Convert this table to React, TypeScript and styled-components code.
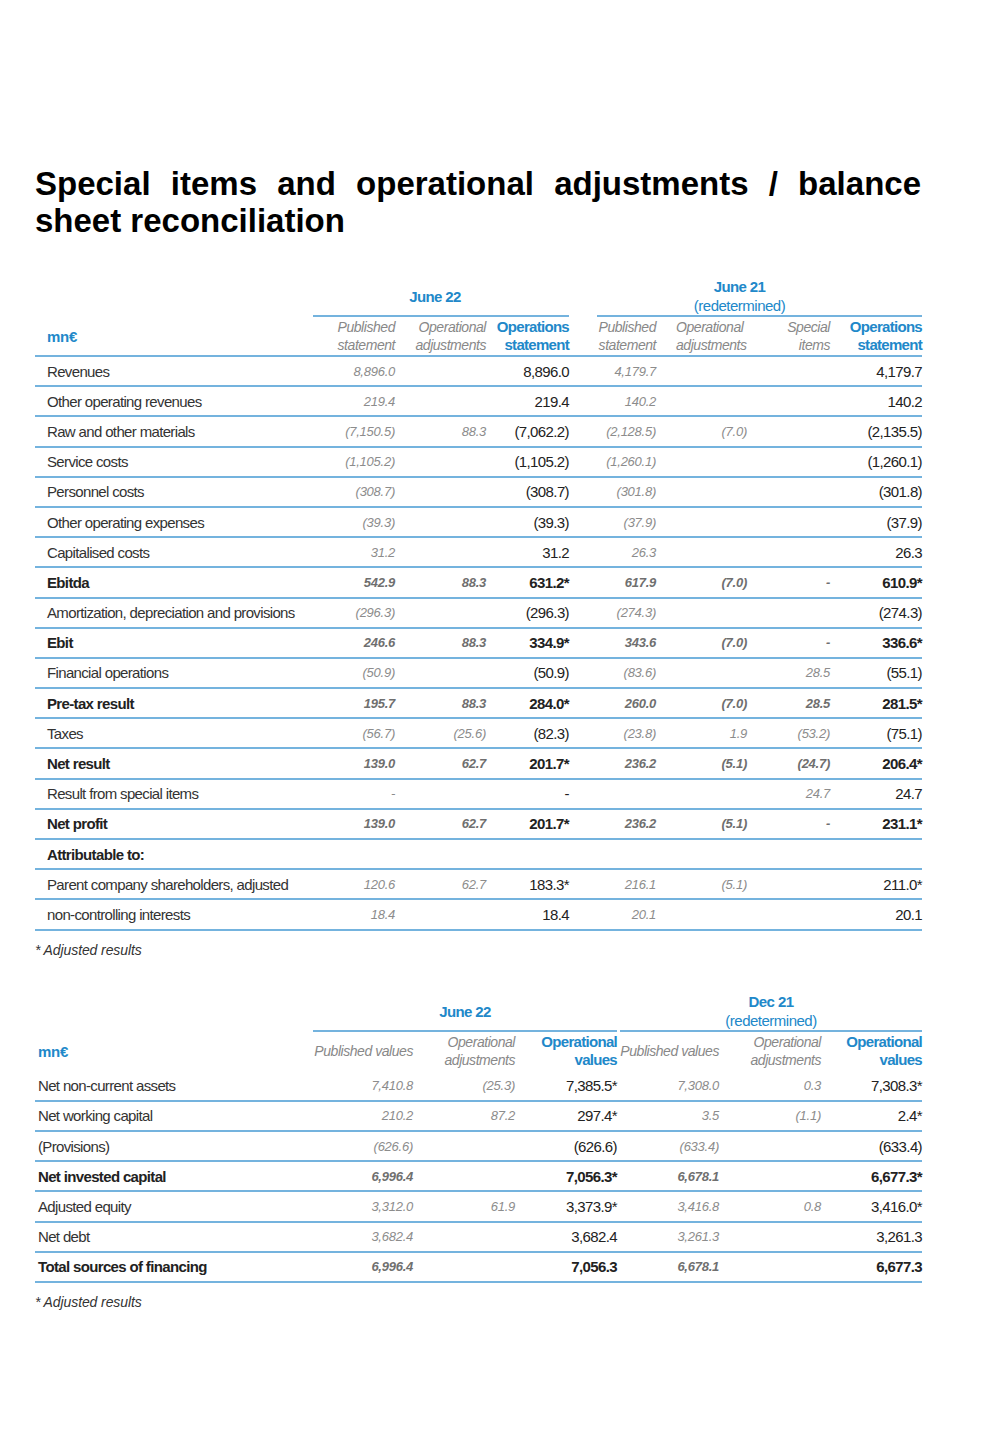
import React from "react";
import styled, { createGlobalStyle } from "styled-components";

const GlobalStyle = createGlobalStyle`
	html, body {
		margin: 0;
		padding: 0;
		background: #fff;
	}
	body {
		font-family: "Liberation Sans Narrow", "Arial Narrow", "Liberation Sans", Arial, sans-serif;
		color: #333;
	}
`;

const BLUE = "#2188c9";
const LINE = "#74b3de";

const Page = styled.div`
	width: 1000px;
	min-height: 1430px;
	box-sizing: border-box;
	padding: 165px 78px 0 35px;
`;

const Title = styled.h1`
	margin: 0;
	width: 886px;
	font-family: "Liberation Sans", Arial, sans-serif;
	font-size: 33px;
	line-height: 37px;
	font-weight: bold;
	color: #000;
	text-align: justify;
`;

const Table = styled.table<{ $first?: boolean }>`
	width: 887px;
	margin-top: ${(p) => (p.$first ? "38px" : "33px")};
	border-collapse: collapse;
	table-layout: fixed;
`;

const GroupCell = styled.th`
	padding: 0;
	vertical-align: bottom;
	font-weight: bold;
	font-size: 15px;
	line-height: 19px;
	letter-spacing: -0.6px;
	color: ${BLUE};
`;

const GroupInner = styled.div<{ $inset: number; $shift: number; $below: number }>`
	margin-left: ${(p) => p.$inset}px;
	border-bottom: 2px solid ${LINE};
	padding: 0 ${(p) => p.$shift}px ${(p) => p.$below}px 0;
	text-align: center;
`;

const Sub = styled.div`
	font-weight: normal;
	font-size: 15px;
	line-height: 19px;
	letter-spacing: -0.5px;
`;

const HeadRow = styled.tr<{ $line: boolean; $h: number }>`
	height: ${(p) => p.$h}px;
	border-bottom: ${(p) => (p.$line ? `2px solid ${LINE}` : "none")};
`;

const UnitCell = styled.th<{ $pad: number }>`
	padding: 0 0 0 ${(p) => p.$pad}px;
	text-align: left;
	font-weight: bold;
	font-size: 15px;
	letter-spacing: -0.3px;
	color: ${BLUE};
	vertical-align: middle;
`;

const ColHead = styled.th<{ $strong?: boolean; $left?: number }>`
	padding: 0 0 0 ${(p) => p.$left ?? 0}px;
	text-align: ${(p) => (p.$left ? "left" : "right")};
	vertical-align: middle;
	line-height: 18px;
	font-size: ${(p) => (p.$strong ? "15px" : "14px")};
	font-weight: ${(p) => (p.$strong ? "bold" : "normal")};
	font-style: ${(p) => (p.$strong ? "normal" : "italic")};
	letter-spacing: ${(p) => (p.$strong ? "-0.7px" : "-0.45px")};
	color: ${(p) => (p.$strong ? BLUE : "#888")};
	white-space: nowrap;
`;

const Row = styled.tr`
	height: 30.2px;
	border-bottom: 2px solid ${LINE};
`;

const Label = styled.td<{ $pad: number; $bold?: boolean }>`
	padding: 0 0 0 ${(p) => p.$pad}px;
	font-size: 15px;
	letter-spacing: -0.65px;
	font-weight: ${(p) => (p.$bold ? "bold" : "normal")};
	color: ${(p) => (p.$bold ? "#222" : "#333")};
	white-space: nowrap;
`;

const Num = styled.td<{ $ops?: boolean; $bold?: boolean }>`
	padding: 0;
	text-align: right;
	white-space: nowrap;
	font-size: ${(p) => (p.$ops ? "15px" : "13px")};
	letter-spacing: ${(p) => (p.$ops ? "-0.6px" : "-0.25px")};
	font-style: ${(p) => (p.$ops ? "normal" : "italic")};
	font-weight: ${(p) => (p.$bold ? "bold" : "normal")};
	color: ${(p) => (p.$ops ? "#222" : p.$bold ? "#6f6f6f" : "#8c8c8c")};
`;

const Note = styled.p<{ $top: number }>`
	margin: ${(p) => p.$top}px 0 0 0;
	font-family: "Liberation Sans", Arial, sans-serif;
	font-style: italic;
	font-size: 14px;
	line-height: 18px;
	letter-spacing: -0.1px;
	color: #333;
`;

type Line = { label: string; bold?: boolean; v: string[] };

const incomeRows: Line[] = [
	{ label: "Revenues", v: ["8,896.0", "", "8,896.0", "4,179.7", "", "", "4,179.7"] },
	{ label: "Other operating revenues", v: ["219.4", "", "219.4", "140.2", "", "", "140.2"] },
	{ label: "Raw and other materials", v: ["(7,150.5)", "88.3", "(7,062.2)", "(2,128.5)", "(7.0)", "", "(2,135.5)"] },
	{ label: "Service costs", v: ["(1,105.2)", "", "(1,105.2)", "(1,260.1)", "", "", "(1,260.1)"] },
	{ label: "Personnel costs", v: ["(308.7)", "", "(308.7)", "(301.8)", "", "", "(301.8)"] },
	{ label: "Other operating expenses", v: ["(39.3)", "", "(39.3)", "(37.9)", "", "", "(37.9)"] },
	{ label: "Capitalised costs", v: ["31.2", "", "31.2", "26.3", "", "", "26.3"] },
	{ label: "Ebitda", bold: true, v: ["542.9", "88.3", "631.2*", "617.9", "(7.0)", "-", "610.9*"] },
	{ label: "Amortization, depreciation and provisions", v: ["(296.3)", "", "(296.3)", "(274.3)", "", "", "(274.3)"] },
	{ label: "Ebit", bold: true, v: ["246.6", "88.3", "334.9*", "343.6", "(7.0)", "-", "336.6*"] },
	{ label: "Financial operations", v: ["(50.9)", "", "(50.9)", "(83.6)", "", "28.5", "(55.1)"] },
	{ label: "Pre-tax result", bold: true, v: ["195.7", "88.3", "284.0*", "260.0", "(7.0)", "28.5", "281.5*"] },
	{ label: "Taxes", v: ["(56.7)", "(25.6)", "(82.3)", "(23.8)", "1.9", "(53.2)", "(75.1)"] },
	{ label: "Net result", bold: true, v: ["139.0", "62.7", "201.7*", "236.2", "(5.1)", "(24.7)", "206.4*"] },
	{ label: "Result from special items", v: ["-", "", "-", "", "", "24.7", "24.7"] },
	{ label: "Net profit", bold: true, v: ["139.0", "62.7", "201.7*", "236.2", "(5.1)", "-", "231.1*"] },
	{ label: "Attributable to:", bold: true, v: ["", "", "", "", "", "", ""] },
	{ label: "Parent company shareholders, adjusted", v: ["120.6", "62.7", "183.3*", "216.1", "(5.1)", "", "211.0*"] },
	{ label: "non-controlling interests", v: ["18.4", "", "18.4", "20.1", "", "", "20.1"] },
];

const balanceRows: Line[] = [
	{ label: "Net non-current assets", v: ["7,410.8", "(25.3)", "7,385.5*", "7,308.0", "0.3", "7,308.3*"] },
	{ label: "Net working capital", v: ["210.2", "87.2", "297.4*", "3.5", "(1.1)", "2.4*"] },
	{ label: "(Provisions)", v: ["(626.6)", "", "(626.6)", "(633.4)", "", "(633.4)"] },
	{ label: "Net invested capital", bold: true, v: ["6,996.4", "", "7,056.3*", "6,678.1", "", "6,677.3*"] },
	{ label: "Adjusted equity", v: ["3,312.0", "61.9", "3,373.9*", "3,416.8", "0.8", "3,416.0*"] },
	{ label: "Net debt", v: ["3,682.4", "", "3,682.4", "3,261.3", "", "3,261.3"] },
	{ label: "Total sources of financing", bold: true, v: ["6,996.4", "", "7,056.3", "6,678.1", "", "6,677.3"] },
];

function TwoLine({ a, b }: { a: string; b: string }) {
	return (
		<>
			{a}
			<br />
			{b}
		</>
	);
}

function Body({ rows, ops, pad }: { rows: Line[]; ops: number[]; pad: number }) {
	return (
		<tbody>
			{rows.map((r) => (
				<Row key={r.label}>
					<Label $pad={pad} $bold={r.bold}>{r.label}</Label>
					{r.v.map((x, i) => (
						<Num key={i} $ops={ops.includes(i)} $bold={r.bold}>
							{x}
						</Num>
					))}
				</Row>
			))}
		</tbody>
	);
}

function IncomeTable() {
	return (
		<Table $first>
			<colgroup>
				<col style={{ width: 278 }} />
				<col style={{ width: 82 }} />
				<col style={{ width: 91 }} />
				<col style={{ width: 83 }} />
				<col style={{ width: 87 }} />
				<col style={{ width: 91 }} />
				<col style={{ width: 83 }} />
				<col style={{ width: 92 }} />
			</colgroup>
			<thead>
				<HeadRow $line={false} $h={38}>
					<th />
					<GroupCell colSpan={3}>
						<GroupInner $inset={0} $shift={12} $below={9}>June 22</GroupInner>
					</GroupCell>
					<GroupCell colSpan={4}>
						<GroupInner $inset={28} $shift={40} $below={0}>
							June 21
							<Sub>(redetermined)</Sub>
						</GroupInner>
					</GroupCell>
				</HeadRow>
				<HeadRow $line $h={39}>
					<UnitCell $pad={12}>mn€</UnitCell>
					<ColHead><TwoLine a="Published" b="statement" /></ColHead>
					<ColHead><TwoLine a="Operational" b="adjustments" /></ColHead>
					<ColHead $strong><TwoLine a="Operations" b="statement" /></ColHead>
					<ColHead><TwoLine a="Published" b="statement" /></ColHead>
					<ColHead $left={20}><TwoLine a="Operational" b="adjustments" /></ColHead>
					<ColHead><TwoLine a="Special" b="items" /></ColHead>
					<ColHead $strong><TwoLine a="Operations" b="statement" /></ColHead>
				</HeadRow>
			</thead>
			<Body rows={incomeRows} ops={[2, 6]} pad={12} />
		</Table>
	);
}

function BalanceTable() {
	return (
		<Table>
			<colgroup>
				<col style={{ width: 276 }} />
				<col style={{ width: 102 }} />
				<col style={{ width: 102 }} />
				<col style={{ width: 102 }} />
				<col style={{ width: 102 }} />
				<col style={{ width: 102 }} />
				<col style={{ width: 101 }} />
			</colgroup>
			<thead>
				<HeadRow $line={false} $h={37}>
					<th />
					<GroupCell colSpan={3}>
						<GroupInner $inset={2} $shift={0} $below={9}>June 22</GroupInner>
					</GroupCell>
					<GroupCell colSpan={3}>
						<GroupInner $inset={3} $shift={0} $below={0}>
							Dec 21
							<Sub>(redetermined)</Sub>
						</GroupInner>
					</GroupCell>
				</HeadRow>
				<HeadRow $line={false} $h={39}>
					<UnitCell $pad={3}>mn€</UnitCell>
					<ColHead>Published values</ColHead>
					<ColHead><TwoLine a="Operational" b="adjustments" /></ColHead>
					<ColHead $strong><TwoLine a="Operational" b="values" /></ColHead>
					<ColHead>Published values</ColHead>
					<ColHead><TwoLine a="Operational" b="adjustments" /></ColHead>
					<ColHead $strong><TwoLine a="Operational" b="values" /></ColHead>
				</HeadRow>
			</thead>
			<Body rows={balanceRows} ops={[2, 5]} pad={3} />
		</Table>
	);
}

export default function App() {
	return (
		<Page>
			<GlobalStyle />
			<Title>Special items and operational adjustments / balance sheet reconciliation</Title>
			<IncomeTable />
			<Note $top={10}>* Adjusted results</Note>
			<BalanceTable />
			<Note $top={10}>* Adjusted results</Note>
		</Page>
	);
}
